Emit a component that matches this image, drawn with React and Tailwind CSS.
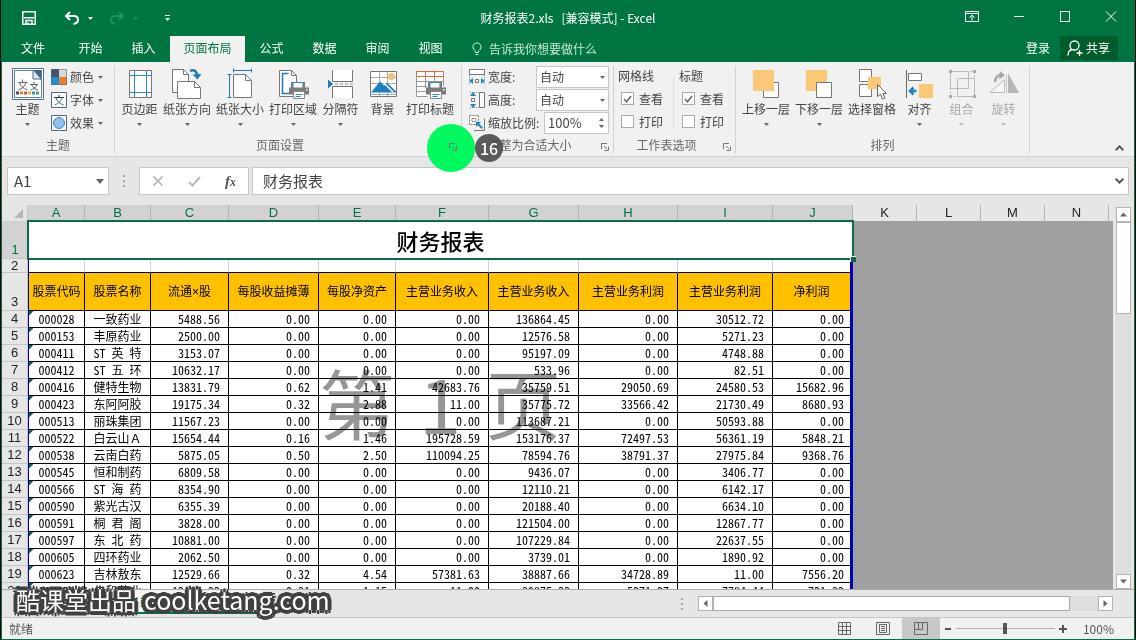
import React, { useState } from "react";

const TABS = ["开始", "插入", "页面布局", "公式", "数据", "审阅", "视图"];

const COLUMNS = [
  { key: "A", width: 57, title: "股票代码" },
  { key: "B", width: 66, title: "股票名称" },
  { key: "C", width: 78, title: "流通×股" },
  { key: "D", width: 90, title: "每股收益摊薄" },
  { key: "E", width: 77, title: "每股净资产" },
  { key: "F", width: 93, title: "主营业务收入" },
  { key: "G", width: 90, title: "主营业务收入" },
  { key: "H", width: 99, title: "主营业务利润" },
  { key: "I", width: 95, title: "主营业务利润" },
  { key: "J", width: 80, title: "净利润" },
];

const EMPTY_COLUMNS = ["K", "L", "M", "N"];

const ROWS = [
  ["000028", "一致药业", "5488.56", "0.00", "0.00", "0.00", "136864.45", "0.00", "30512.72", "0.00"],
  ["000153", "丰原药业", "2500.00", "0.00", "0.00", "0.00", "12576.58", "0.00", "5271.23", "0.00"],
  ["000411", "ST 英 特", "3153.07", "0.00", "0.00", "0.00", "95197.09", "0.00", "4748.88", "0.00"],
  ["000412", "ST 五 环", "10632.17", "0.00", "0.00", "0.00", "533.96", "0.00", "82.51", "0.00"],
  ["000416", "健特生物", "13831.79", "0.62", "1.41", "42683.76", "35759.51", "29050.69", "24580.53", "15682.96"],
  ["000423", "东阿阿胶", "19175.34", "0.32", "2.88", "11.00", "35775.72", "33566.42", "21730.49", "8680.93"],
  ["000513", "丽珠集团", "11567.23", "0.00", "0.00", "0.00", "113687.21", "0.00", "50593.88", "0.00"],
  ["000522", "白云山Ａ", "15654.44", "0.16", "1.46", "195728.59", "153176.37", "72497.53", "56361.19", "5848.21"],
  ["000538", "云南白药", "5875.05", "0.50", "2.50", "110094.25", "78594.76", "38791.37", "27975.84", "9368.76"],
  ["000545", "恒和制药", "6809.58", "0.00", "0.00", "0.00", "9436.07", "0.00", "3406.77", "0.00"],
  ["000566", "ST 海 药", "8354.90", "0.00", "0.00", "0.00", "12110.21", "0.00", "6142.17", "0.00"],
  ["000590", "紫光古汉", "6355.39", "0.00", "0.00", "0.00", "20188.40", "0.00", "6634.10", "0.00"],
  ["000591", "桐 君 阁", "3828.00", "0.00", "0.00", "0.00", "121504.00", "0.00", "12867.77", "0.00"],
  ["000597", "东 北 药", "10881.00", "0.00", "0.00", "0.00", "107229.84", "0.00", "22637.55", "0.00"],
  ["000605", "四环药业", "2062.50", "0.00", "0.00", "0.00", "3739.01", "0.00", "1890.92", "0.00"],
  ["000623", "吉林敖东", "12529.66", "0.32", "4.54", "57381.63", "38887.66", "34728.89", "11.00", "7556.20"],
  ["000650", "仁和药业", "12161.22", "0.31", "1.15", "11.00", "39875.33", "5271.27", "7784.44", "721.32"],
];

/* ---------- small glyphs ---------- */

const Caret = ({ className = "text-[#666]" }) => (
  <svg width="5" height="3" viewBox="0 0 5 3" className={className} aria-hidden="true">
    <path d="M0 0h5L2.5 3z" fill="currentColor" />
  </svg>
);

const Arrow = ({ d }) => (
  <svg width="7" height="7" viewBox="0 0 7 7" fill="#666" aria-hidden="true">
    <path d={d} />
  </svg>
);

const ChevronUp = () => (
  <svg width="9" height="6" viewBox="0 0 9 6" fill="none" stroke="#555" strokeWidth="2" aria-hidden="true">
    <path d="M.7 5.2l3.8-3.8 3.8 3.8" />
  </svg>
);

const Dots = () => (
  <svg width="2" height="12" viewBox="0 0 2 12" fill="#a6a6a6" aria-hidden="true">
    <path d="M0 0h2v2H0zM0 5h2v2H0zM0 10h2v2H0z" />
  </svg>
);

/* ---------- ribbon icons ---------- */

const Big = ({ children }) => (
  <svg width="32" height="32" viewBox="0 0 32 32" fill="none" aria-hidden="true">
    {children}
  </svg>
);

const Small = ({ children }) => (
  <svg width="16" height="16" viewBox="0 0 16 16" fill="none" className="shrink-0" aria-hidden="true">
    {children}
  </svg>
);

const ThemeIcon = () => (
  <Big>
    <path d="M.5.5h31v31H.5z" fill="#fff" stroke="#4f6f93" />
    <path d="M2.500 2.500h27v27h-27z" fill="#fff" stroke="#5f7fa0" />
    <path d="M21 2h8v10z" fill="#4a6580" />
    <path d="M21 3v8h8" fill="#dfe8f0" stroke="#4a6580" />
    <path d="M6 14.500h9.500M10.500 11.500v3M14 14.500c-1 4-4 6-7.500 7.500M7.500 14.500c1 4 4 6 8 7.500" stroke="#666" />
    <path d="M18 16.500h8M22 14v2.500M25 16.500c-1 3-3.500 4.500-6.500 5.500M19.500 16.500c1 3 3.500 4.500 6.500 5.500" stroke="#666" />
    <path d="M4 23.500h3v3H4z" fill="#3c4f6b" />
    <path d="M8 23.500h3v3H8z" fill="#e87d2b" />
    <path d="M12 23.500h3v3h-3z" fill="#d8573c" />
    <path d="M16 23.500h3v3h-3z" fill="#f2b530" />
    <path d="M20 23.500h3v3h-3z" fill="#2b8fc9" />
    <path d="M24 23.500h3v3h-3z" fill="#5f9b3c" />
  </Big>
);

const ColorsIcon = () => (
  <Small>
    <path d="M0 0h8v8H0z" fill="#44546a" />
    <path d="M8 0h8v8H8z" fill="#d9d9d9" />
    <path d="M0 8h8v8H0z" fill="#1e90d2" />
    <path d="M8 8h8v8H8z" fill="#ed7d31" />
    <path d="M.5.5h15v15H.5z" stroke="#5d6b7c" strokeOpacity=".6" />
  </Small>
);

const FontsIcon = () => (
  <Small>
    <path d="M.5.5h15v15H.5z" fill="#fff" stroke="#50677f" />
    <path d="M3 5.500h10M8 3v2.500" stroke="#333" />
    <path d="M11 5.500c-1 4-3.500 6-7.500 7.500" stroke="#2f7fc0" />
    <path d="M5 5.500c1 4 3.500 6 7.500 7.500" stroke="#3b6b3a" />
  </Small>
);

const EffectsIcon = () => (
  <Small>
    <path d="M.5.5h15v15H.5z" fill="#fff" stroke="#50677f" />
    <circle cx="8" cy="8" r="5.500" fill="#8fc1ea" stroke="#3f87c7" />
  </Small>
);

const MarginsIcon = () => (
  <Big>
    <path d="M5.500 2.500h22v27h-22z" fill="#fff" stroke="#777" />
    <path d="M10.500 3v26M22.500 3v26M6 7.500h21M6 24.500h21" stroke="#2b8ac6" />
  </Big>
);

const OrientationIcon = () => (
  <Big>
    <path d="M7.500 24.500h-6v-23h11l5 5v7" fill="#fff" stroke="#777" />
    <path d="M12.500 1.500v5h5" stroke="#777" />
    <path d="M6.500 13.500h17l6 6v11h-23z" fill="#fff" stroke="#777" />
    <path d="M23.500 13.500v6h6" stroke="#777" />
    <path d="M19 3c4-2 7 0 7 5" stroke="#1f78bb" strokeWidth="2.500" />
    <path d="M21.500 6.500l5 5 4-5.500z" fill="#1f78bb" />
  </Big>
);

const PaperSizeIcon = () => (
  <Big>
    <path d="M9.500 6.500h12l6 6v17h-18z" fill="#fff" stroke="#777" />
    <path d="M21.500 6.500v6h6" stroke="#777" />
    <path d="M9.500 2.500h18M9.500.5v4M27.500.5v4M5.500 6.500v23M3.500 6.500h4M3.500 29.500h4" stroke="#1f78bb" />
  </Big>
);

const Printer = () => (
  <g>
    <path d="M16 14.500h10v6H16z" fill="#fff" stroke="#2b8ac6" />
    <path d="M12 19.500h20v7H12z" fill="#7b7b7b" />
    <path d="M14 14v6h2v-6M26 14v6h2v-6" fill="#7b7b7b" />
    <path d="M16.500 23.500h11v7h-11z" fill="#fff" stroke="#888" />
    <path d="M18.500 26.500h7M18.500 28.500h5" stroke="#2b8ac6" />
    <path d="M29 21h1.500v1.500H29z" fill="#fff" />
  </g>
);

const PrintAreaIcon = () => (
  <Big>
    <path d="M2.500 2.500h12l5 5v21h-17z" fill="#fff" stroke="#777" />
    <path d="M14.500 2.500v5h5" stroke="#777" />
    <path d="M12 25.500H5.500v-20h6" stroke="#1f78bb" strokeWidth="1.500" />
    <Printer />
  </Big>
);

const BreaksIcon = () => (
  <Big>
    <path d="M7.500 2v11.500h20V2M7.500 30V18.500h20V30" fill="#fff" stroke="#777" />
    <path d="M10 16h18" stroke="#999" strokeDasharray="3 2" />
    <path d="M3 11.500l5 4.500-5 4.500z" fill="#1f78bb" />
  </Big>
);

const BackgroundIcon = () => (
  <Big>
    <path d="M3.500 3.500h26v25h-26z" fill="#fff" stroke="#777" />
    <path d="M12.500 4v24M20.500 4v24M4 9.500h25M4 15.500h25M4 26.500h25" stroke="#aaa" />
    <circle cx="24.500" cy="8.500" r="3.500" fill="#f3c07a" />
    <path d="M4 24.500l9-11 4 4 3-3 9 9v1z" fill="#1f7ec2" />
    <path d="M17 15l9 9" stroke="#fff" strokeWidth="1.500" />
  </Big>
);

const PrintTitlesIcon = () => (
  <Big>
    <path d="M2.500 3.500h27v25h-27z" fill="#fff" />
    <path d="M2.500 8v20.500h11M11.500 8v12M20.500 8v6M29.500 8v10M3 13.500h26M3 18.500h10M3 23.500h9" stroke="#999" />
    <path d="M2.500 3.500h27v5h-27zM11.500 3.500v5M20.500 3.500v5" fill="#fff" stroke="#e0663a" />
    <Printer />
  </Big>
);

const WidthIcon = () => (
  <Small>
    <path d="M.5.5h15v5H.5z" fill="#fff" stroke="#777" />
    <path d="M.5 6v9M15.500 6v9" stroke="#888" strokeDasharray="1 1" />
    <path d="M6.500 10.500h3v3h-3z" stroke="#777" />
    <path d="M0 12l4-3v6zM16 12l-4-3v6z" fill="#1f86c0" />
  </Small>
);

const HeightIcon = () => (
  <Small>
    <path d="M10.500.5h5v15h-5z" fill="#fff" stroke="#777" />
    <path d="M1 .5h9M1 15.500h9" stroke="#888" strokeDasharray="1 1" />
    <path d="M2.500 6.500h3v3h-3z" stroke="#777" />
    <path d="M4 0L1 4h6zM4 16l-3-4h6z" fill="#1f86c0" />
  </Small>
);

const ScaleIcon = () => (
  <Small>
    <path d="M5 15.500h10.500v-12" fill="none" stroke="#777" />
    <path d="M.5.5h9v9h-9z" fill="#fff" stroke="#777" strokeDasharray="2 1" />
    <path d="M3 3.500h4v3H3z" stroke="#999" />
    <path d="M7 7h5l-1.800 1.800L14 12.600 12.600 14 8.800 10.200 7 12z" fill="#1f86c0" />
  </Small>
);

const ForwardIcon = () => (
  <Big>
    <path d="M13.500 14.500h15v15h-15z" fill="#fff" stroke="#777" />
    <path d="M3 2h21v21H3z" fill="#fbc878" />
  </Big>
);

const BackwardIcon = () => (
  <Big>
    <path d="M3 2h21v21H3z" fill="#fbc878" />
    <path d="M13.500 14.500h15v15h-15z" fill="#fff" stroke="#777" />
  </Big>
);

const PaneIcon = () => (
  <Big>
    <path d="M3.500 1.500h12v12h-12zM3.500 16.500h12v12h-12z" fill="#fff" stroke="#777" />
    <path d="M12 9h13v12H12z" fill="#fbc878" />
    <path d="M21.500 16.500v12l3-2.500 2 5 2.500-1-2-4.500h3.500z" fill="#fff" stroke="#666" />
  </Big>
);

const AlignIcon = () => (
  <Big>
    <path d="M2.500 2v28" stroke="#666" />
    <path d="M4.500 5.500h13v7h-13z" fill="#fff" stroke="#777" />
    <path d="M15 16h14v14H15z" fill="#fbc878" />
    <path d="M12.500 23H7M9.500 19.500L6 23l3.500 3.500" stroke="#1f86c0" strokeWidth="2.500" />
  </Big>
);

const GroupIcon = () => (
  <Big>
    <path d="M4.500 3.500h24v25h-24z" stroke="#bbb" strokeDasharray="2 2" />
    <path d="M4.500 3.500h18v17h-18zM11.500 10.500h17v18h-17z" stroke="#bbb" />
    <path d="M3 2h3v3H3zM27 2h3v3h-3zM3 27h3v3H3zM27 27h3v3h-3z" fill="#aaa" />
  </Big>
);

const RotateIcon = () => (
  <Big>
    <path d="M16.500 11.500v13H2z" fill="#f6f6f6" stroke="#bbb" />
    <path d="M20 5v20h11z" fill="#b5b5b5" />
    <path d="M7 14c0-5 4-8 8-7" stroke="#aaa" strokeWidth="2.500" />
    <path d="M12 3l5 4.500-6 4z" fill="#aaa" />
    <path d="M18.500 6v20" stroke="#ccc" />
  </Big>
);

/* ---------- ribbon pieces ---------- */

const BigButton = ({ icon, label, caret = true, disabled = false }) => (
  <button
    disabled={disabled}
    className="flex flex-col items-center min-w-[37px] h-[62px] mt-0.5 whitespace-nowrap disabled:text-[#a6a6a6]"
  >
    {icon}
    <span className="leading-[18px]">{label}</span>
    {caret && <Caret className={disabled ? "mt-[5px] text-[#c0c0c0]" : "mt-[5px] text-[#666]"} />}
  </button>
);

const SmallButton = ({ icon, label }) => (
  <button className="flex items-center h-[22px]">
    {icon}
    <span className="ml-[3px] mr-1">{label}</span>
    <Caret />
  </button>
);

const Group = ({ title, width, launcher = false, children }) => (
  <section className="flex flex-col shrink-0 border-r border-[#d2d2d2] h-[88px]" style={{ width }}>
    <div className="h-[70px]">{children}</div>
    <div className="flex items-center h-[18px] text-[#666]">
      <h2 className="flex-1 text-center">{title}</h2>
      {launcher && (
        <button aria-label={title} className="relative z-10 w-4 h-4 pt-1 pl-1">
          <svg width="8" height="8" viewBox="0 0 8 8" fill="none" stroke="#777" aria-hidden="true">
            <path d="M.5 6V.5H6M3 3l3 3M7.500 3.500v4h-4" />
          </svg>
        </button>
      )}
    </div>
  </section>
);

const FitSelect = ({ id, icon, label }) => (
  <div className="flex items-center h-[22px]">
    {icon}
    <label htmlFor={id} className="ml-[3px] flex-1">{label}</label>
    <div className="grid items-center w-[73px]">
      <select
        id={id}
        className="col-start-1 row-start-1 appearance-none w-full h-[22px] pl-[3px] bg-white border border-[#c6c6c6] text-[#444]"
      >
        <option>自动</option>
      </select>
      <span className="col-start-1 row-start-1 justify-self-end mr-1 pointer-events-none">
        <Caret />
      </span>
    </div>
  </div>
);

const Check = ({ label, name, defaultChecked }) => (
  <label className="flex items-center h-[23px] ml-[3px]">
    <span className="grid place-items-center mr-[5px]">
      <input
        type="checkbox"
        aria-label={name}
        defaultChecked={defaultChecked}
        className="peer col-start-1 row-start-1 appearance-none w-[13px] h-[13px] bg-white border border-[#ababab]"
      />
      <svg
        width="9"
        height="8"
        viewBox="0 0 9 8"
        fill="none"
        stroke="#666"
        strokeWidth="1.500"
        className="col-start-1 row-start-1 invisible peer-checked:visible pointer-events-none"
        aria-hidden="true"
      >
        <path d="M1 4l2.500 2.800L8 1" />
      </svg>
    </span>
    {label}
  </label>
);

const TitleBar = () => (
  <header className="grid grid-cols-[1fr_auto_1fr] items-center h-9 text-white">
    <div className="flex items-center pl-5">
      <button aria-label="保存">
        <svg width="14" height="14" viewBox="0 0 14 14" fill="none" stroke="#fff" strokeWidth="1.500" aria-hidden="true">
          <path d="M.8.8h12.400v12.400H.8zM2 6.800h10M4 13V9.500h6V13" />
          <path d="M5.500 11.500h1.500V13H5.500z" fill="#fff" stroke="none" />
        </svg>
      </button>
      <button aria-label="撤消" className="ml-7">
        <svg width="16" height="14" viewBox="0 0 16 14" fill="none" stroke="#fff" strokeWidth="2" aria-hidden="true">
          <path d="M6 1L2 5l4 4M2.500 5H10c3 0 4 2 4 3.800 0 2.200-1.500 3.700-4.500 4.200" />
        </svg>
      </button>
      <Caret className="ml-2 text-white" />
      <button aria-label="恢复" className="ml-4" disabled>
        <svg width="16" height="14" viewBox="0 0 16 14" fill="none" stroke="#1f9160" strokeWidth="2" aria-hidden="true">
          <path d="M10 1l4 4-4 4M13.500 5H6C3 5 2 7 2 8.800 2 11 3.500 12.500 6.500 13" />
        </svg>
      </button>
      <Caret className="ml-2 text-[#1f9160]" />
      <button aria-label="自定义快速访问工具栏" className="ml-[26px]">
        <svg width="7" height="7" viewBox="0 0 7 7" fill="#fff" aria-hidden="true">
          <path d="M1 0h5v1H1zM1 3h5L3.500 6z" />
        </svg>
      </button>
    </div>
    <h1 className="whitespace-pre">财务报表2.xls   [兼容模式] - Excel</h1>
    <div className="flex items-center justify-end gap-[34px] pr-[17px] pb-1">
      <button aria-label="功能区显示选项">
        <svg width="14" height="11" viewBox="0 0 14 11" fill="none" stroke="#fff" aria-hidden="true">
          <path d="M.5.5h13v10H.5zM.5 2.500h13M7 9.500v-5M4.500 6.500L7 4.200l2.500 2.300" />
        </svg>
      </button>
      <button aria-label="最小化">
        <svg width="12" height="11" viewBox="0 0 12 11" stroke="#fff" aria-hidden="true">
          <path d="M1 5.500h10" />
        </svg>
      </button>
      <button aria-label="最大化">
        <svg width="12" height="11" viewBox="0 0 12 11" fill="none" stroke="#fff" aria-hidden="true">
          <path d="M1.500.5h9v10h-9z" />
        </svg>
      </button>
      <button aria-label="关闭">
        <svg width="12" height="11" viewBox="0 0 12 11" stroke="#fff" aria-hidden="true">
          <path d="M1 .5l10 10M11 .5l-10 10" />
        </svg>
      </button>
    </div>
  </header>
);

const TabBar = ({ active, onSelect }) => (
  <nav className="flex h-[26px] text-white">
    <button className="w-[62px] pb-0.5">文件</button>
    {TABS.map((tab) => (
      <button
        key={tab}
        onClick={() => onSelect(tab)}
        className={
          tab === active
            ? "w-[75px] pb-0.5 bg-[#f1f1f1] text-[#007542]"
            : "w-[53px] pb-0.5"
        }
      >
        {tab}
      </button>
    ))}
    <button className="flex items-center ml-[15px] text-[#c9e8d8]">
      <svg width="10" height="14" viewBox="0 0 10 14" fill="none" stroke="#d8efe3" aria-hidden="true">
        <path d="M3.500 10.500V9C2 7.800 1 6.600 1 4.800 1 2.500 2.800 1 5 1s4 1.500 4 3.800C9 6.600 8 7.800 6.500 9v1.500zM3.500 12.500h3" />
      </svg>
      <span className="ml-[7px]">告诉我你想要做什么</span>
    </button>
    <div className="flex-1" />
    <button className="pb-0.5">登录</button>
    <button className="flex items-center w-[58px] h-[24px] ml-[10px] mr-4 pl-[7px] bg-[#005c2b]">
      <svg width="16" height="16" viewBox="0 0 16 16" fill="none" stroke="#fff" strokeWidth="1.300" aria-hidden="true">
        <circle cx="7.500" cy="5.500" r="4.500" />
        <path d="M1 15.500c0-3.500 2-5.500 4-6M12.500 10v6M9.500 13h6" />
      </svg>
      <span className="ml-[3px]">共享</span>
    </button>
  </nav>
);

const Ribbon = () => (
  <div className="relative flex h-[95px] pt-1 bg-[#f1f1f1] border-b border-[#d2d2d2] text-[#444]">
    <Group title="主题" width={113}>
      <div className="flex pl-[7px]">
        <BigButton icon={<ThemeIcon />} label="主题" />
        <div className="flex flex-col gap-px ml-[5px]">
          <SmallButton icon={<ColorsIcon />} label="颜色" />
          <SmallButton icon={<FontsIcon />} label="字体" />
          <SmallButton icon={<EffectsIcon />} label="效果" />
        </div>
      </div>
    </Group>
    <Group title="页面设置" width={347} launcher>
      <div className="flex gap-[5px] pl-[6px]">
        <BigButton icon={<MarginsIcon />} label="页边距" />
        <BigButton icon={<OrientationIcon />} label="纸张方向" />
        <BigButton icon={<PaperSizeIcon />} label="纸张大小" />
        <BigButton icon={<PrintAreaIcon />} label="打印区域" />
        <BigButton icon={<BreaksIcon />} label="分隔符" />
        <BigButton icon={<BackgroundIcon />} label="背景" caret={false} />
        <BigButton icon={<PrintTitlesIcon />} label="打印标题" caret={false} />
      </div>
    </Group>
    <Group title="调整为合适大小" width={152} launcher>
      <div className="flex flex-col gap-px pl-[7px] pr-1">
        <FitSelect id="fit-width" icon={<WidthIcon />} label="宽度:" />
        <FitSelect id="fit-height" icon={<HeightIcon />} label="高度:" />
        <div className="flex items-center h-[22px]">
          <ScaleIcon />
          <label htmlFor="fit-scale" className="ml-[3px] flex-1 whitespace-nowrap">缩放比例:</label>
          <div className="flex w-[65px] h-[22px] bg-white border border-[#c6c6c6]">
            <input id="fit-scale" defaultValue="100%" className="w-0 flex-1 pl-[3px] text-[13px] outline-none" />
            <div className="flex flex-col justify-evenly pr-1">
              <button aria-label="增大">
                <Caret className="rotate-180 text-[#666]" />
              </button>
              <button aria-label="减小">
                <Caret />
              </button>
            </div>
          </div>
        </div>
      </div>
    </Group>
    <Group title="工作表选项" width={122} launcher>
      <div className="flex">
        <fieldset className="w-[60px] h-16 pl-1 border-r border-[#dedede]">
          <legend className="h-[21px] leading-5">网格线</legend>
          <Check label="查看" name="查看网格线" defaultChecked />
          <Check label="打印" name="打印网格线" />
        </fieldset>
        <fieldset className="pl-[5px]">
          <legend className="h-[21px] leading-5">标题</legend>
          <Check label="查看" name="查看标题" defaultChecked />
          <Check label="打印" name="打印标题" />
        </fieldset>
      </div>
    </Group>
    <Group title="排列" width={294}>
      <div className="flex gap-[5px] pl-[6px]">
        <BigButton icon={<ForwardIcon />} label="上移一层" />
        <BigButton icon={<BackwardIcon />} label="下移一层" />
        <BigButton icon={<PaneIcon />} label="选择窗格" caret={false} />
        <BigButton icon={<AlignIcon />} label="对齐" />
        <BigButton icon={<GroupIcon />} label="组合" disabled />
        <BigButton icon={<RotateIcon />} label="旋转" disabled />
      </div>
    </Group>
    <div className="flex-1 flex items-end justify-end pr-[10px] pb-[5px]">
      <button aria-label="折叠功能区">
        <ChevronUp />
      </button>
    </div>

    {/* click highlight and step number */}
    <span className="absolute left-[425px] top-[62px] w-12 h-12 rounded-full bg-[#00f95f]" />
    <span className="absolute left-[473px] top-[72px] w-7 h-7 rounded-full bg-[#4a4a4a]/90 text-white text-base font-medium leading-7 text-center z-20">
      16
    </span>
  </div>
);

const FormulaBar = () => (
  <div className="flex h-12 pt-[10px] px-[5px] bg-[#e6e6e6] text-[15px] text-[#444]">
    <div className="flex items-center w-[102px] h-7 bg-white border border-[#c6c6c6]">
      <input aria-label="名称框" defaultValue="A1" className="w-0 flex-1 pl-[6px] outline-none" />
      <button aria-label="名称列表" className="pr-1">
        <svg width="8" height="5" viewBox="0 0 8 5" fill="#666" aria-hidden="true">
          <path d="M0 0h8L4 5z" />
        </svg>
      </button>
    </div>
    <div className="flex items-center justify-center w-[30px] h-7">
      <Dots />
    </div>
    <div className="flex items-center justify-around w-[110px] h-7 bg-white border border-[#c6c6c6]">
      <button aria-label="取消">
        <svg width="12" height="12" viewBox="0 0 12 12" stroke="#bdbdbd" strokeWidth="1.800" aria-hidden="true">
          <path d="M1.500 1.500l9 9M10.500 1.500l-9 9" />
        </svg>
      </button>
      <button aria-label="输入">
        <svg width="13" height="11" viewBox="0 0 13 11" fill="none" stroke="#bdbdbd" strokeWidth="2.200" aria-hidden="true">
          <path d="M1 6l3.500 3.500L12 1" />
        </svg>
      </button>
      <button aria-label="插入函数" className="font-['Liberation_Serif',serif] italic font-bold text-[#555] leading-5">
        f<span className="text-xs">x</span>
      </button>
    </div>
    <div className="flex items-center flex-1 h-7 ml-[3px] bg-white border border-[#c6c6c6]">
      <input aria-label="编辑栏" defaultValue="财务报表" className="w-0 flex-1 pl-[10px] outline-none" />
      <button aria-label="展开编辑栏" className="pl-1 rotate-180">
        <ChevronUp />
      </button>
    </div>
  </div>
);

const RowHead = ({ n, selected = false }) => (
  <th
    scope="row"
    className={
      selected
        ? "p-0 align-bottom bg-[#d2d2d2] border-b border-[#c4c4c4] text-[#007542]"
        : "p-0 align-bottom bg-[#e6e6e6] border-b border-r border-[#c4c4c4] text-[#222]"
    }
  >
    {n}
  </th>
);

const Sheet = () => (
  <div className="relative flex-1 overflow-hidden bg-[#a0a0a0]">
    <table className="table-fixed w-full border-separate border-spacing-0 text-black">
      <colgroup>
        <col className="w-[26px]" />
        {COLUMNS.map((c) => (
          <col key={c.key} style={{ width: c.width }} />
        ))}
        {EMPTY_COLUMNS.map((c) => (
          <col key={c} className="w-16" />
        ))}
        <col />
      </colgroup>
      <thead className="font-['Liberation_Sans',sans-serif] text-[13px] leading-4">
        <tr className="h-4">
          <td className="p-0 bg-[#e6e6e6] border-r border-[#c4c4c4]">
            <svg width="9" height="9" viewBox="0 0 9 9" fill="#b8b8b8" className="ml-auto mr-1" aria-hidden="true">
              <path d="M9 0v9H0z" />
            </svg>
          </td>
          {COLUMNS.map((c) => (
            <th key={c.key} scope="col" className="p-0 font-normal text-[#007542] bg-[#d2d2d2] border-r border-[#b4b4b4]">
              {c.key}
            </th>
          ))}
          {EMPTY_COLUMNS.map((c) => (
            <th key={c} scope="col" className="p-0 font-normal text-[#222] bg-[#e6e6e6] border-r border-[#b4b4b4]">
              {c}
            </th>
          ))}
          <td className="p-0 bg-[#e6e6e6]" />
        </tr>
      </thead>
      <tbody className="leading-4 [&_th]:font-['Liberation_Sans',sans-serif] [&_th]:font-normal [&_th]:text-[13px] [&_th]:leading-4">
        <tr className="h-[38px]">
          <RowHead n={1} selected />
          <td colSpan={10} className="relative p-0 bg-white text-center text-[22px] font-medium">
            财务报表
            <span className="absolute -inset-px border-2 border-[#0b6b43]" />
            <span className="absolute -right-[3px] -bottom-[3px] w-[6px] h-[6px] bg-[#0b6b43] border-t border-l border-white" />
          </td>
        </tr>
        <tr className="h-[14px] [&>th]:leading-[13px]">
          <RowHead n={2} />
          {COLUMNS.map((c) => (
            <td
              key={c.key}
              className="p-0 bg-white border-b border-b-black border-r border-r-[#d4d4d4] first-of-type:border-l first-of-type:border-l-[#0000c0] last:border-r-[3px] last:border-r-[#0000c0]"
            />
          ))}
        </tr>
        <tr className="h-[38px]">
          <RowHead n={3} />
          {COLUMNS.map((c) => (
            <td
              key={c.key}
              className="p-0 bg-[#ffc000] font-['Liberation_Sans','Noto_Sans_CJK_SC',sans-serif] text-center whitespace-nowrap border-b border-r border-black first-of-type:border-l first-of-type:border-l-[#0000c0] last:border-r-[3px] last:border-r-[#0000c0]"
            >
              {c.title}
            </td>
          ))}
        </tr>
        {ROWS.map((row, i) => (
          <tr key={row[0]} className="h-[17px] [font-feature-settings:'hwid']">
            <RowHead n={i + 4} />
            <td className="p-0 text-center bg-white bg-[linear-gradient(135deg,#0b6b43_3px,transparent_3px)] border-b border-r border-black border-l border-l-[#0000c0]">
              {row[0]}
            </td>
            <td
              className={
                row[1].endsWith("Ａ")
                  ? "p-0 text-center bg-white whitespace-pre border-b border-r border-black [font-feature-settings:normal]"
                  : "p-0 text-center bg-white whitespace-pre border-b border-r border-black"
              }
            >
              {row[1]}
            </td>
            {row.slice(2).map((value, j) => (
              <td
                key={j}
                className="p-0 pr-2 last:pr-[6px] text-right bg-white border-b border-r border-black last:border-r-[3px] last:border-r-[#0000c0]"
              >
                {value}
              </td>
            ))}
          </tr>
        ))}
      </tbody>
    </table>

    {/* page number drawn behind the figures in page break preview */}
    <div className="absolute left-[317px] top-[156px] flex gap-6 text-[76px] leading-[80px] text-[#969696] mix-blend-multiply pointer-events-none">
      <span>第</span>
      <span>1</span>
      <span>页</span>
    </div>
  </div>
);

const scrollButton = "flex items-center justify-center w-[15px] h-[15px] bg-white border border-[#b4b4b4]";

const VerticalScroll = () => (
  <div className="flex flex-col items-center w-[21px] pt-[2px] bg-[#e6e6e6]">
    <button aria-label="向上滚动" className={scrollButton}>
      <Arrow d="M0 5.500h7L3.500 1.500z" />
    </button>
    <div className="flex-1 w-[15px] bg-[#dedede]">
      <div className="h-[92px] bg-white border border-[#b4b4b4]" />
    </div>
    <button aria-label="向下滚动" className={scrollButton}>
      <Arrow d="M0 1.500h7L3.500 5.500z" />
    </button>
  </div>
);

const SheetTabs = () => (
  <div className="relative flex items-center h-7 bg-[#e6e6e6] border-t border-[#ababab]">
    <button className="self-start h-6 ml-[100px] w-[160px] border-b-2 border-[#007542] bg-[#f4f4f4] font-bold text-[#007542] whitespace-nowrap">
      ××类上市公司财务指标
    </button>
    <div className="flex-1" />
    <Dots />
    <div className="flex w-[415px] ml-[15px] mr-[21px] bg-[#dedede]">
      <button aria-label="向左滚动" className={scrollButton}>
        <Arrow d="M5.500 0v7L1.500 3.500z" />
      </button>
      <div className="w-[357px] h-[15px] bg-white border border-[#ababab]" />
      <div className="flex-1" />
      <button aria-label="向右滚动" className={scrollButton}>
        <Arrow d="M1.500 0v7l4-3.500z" />
      </button>
    </div>

    {/* the ring of shadows gives the lettering an even, rounded outline */}
    <p className="absolute left-[14px] -top-[5px] flex gap-2 items-baseline text-2xl leading-7 text-white whitespace-nowrap [text-shadow:4px_0_#404040,-4px_0_#404040,0_4px_#404040,0_-4px_#404040,3px_3px_#404040,-3px_3px_#404040,3px_-3px_#404040,-3px_-3px_#404040,2px_0_#404040,-2px_0_#404040,0_2px_#404040,0_-2px_#404040]">
      <span>酷课堂出品</span>
      <span className="text-[25px]">coolketang.com</span>
    </p>
  </div>
);

const StatusBar = () => (
  <footer className="flex items-center h-[22px] bg-[#f1f1f1] border-t border-[#c6c6c6] text-[#555]">
    <span className="pl-[7px]">就绪</span>
    <div className="flex-1" />
    <button aria-label="普通" className="flex justify-center w-[38px]">
      <svg width="13" height="13" viewBox="0 0 13 13" fill="none" stroke="#666" aria-hidden="true">
        <path d="M.5.5h12v12H.5zM4.500.5v12M8.500.5v12M.5 4.500h12M.5 8.500h12" />
      </svg>
    </button>
    <button aria-label="页面布局视图" className="flex justify-center w-[38px]">
      <svg width="14" height="13" viewBox="0 0 14 13" fill="none" stroke="#666" aria-hidden="true">
        <path d="M.5.5h13v12H.5zM3.500 2.500h7v8h-7zM5 4.500h4M5 6.500h4M5 8.500h4" />
      </svg>
    </button>
    <button aria-label="分页预览" className="flex items-center justify-center w-[38px] h-full bg-[#c8c8c8]">
      <svg width="14" height="13" viewBox="0 0 14 13" fill="none" stroke="#666" aria-hidden="true">
        <path d="M.5.5h13v12H.5zM.5 7.500h8v-7M4.500.5v7" />
      </svg>
    </button>
    <button aria-label="缩小" className="ml-[5px]">
      <svg width="7" height="8" viewBox="0 0 7 8" aria-hidden="true">
        <path d="M0 3h6v2H0z" fill="#555" />
      </svg>
    </button>
    <input
      type="range"
      aria-label="缩放"
      min="0"
      max="200"
      defaultValue="100"
      className="w-[99px] h-3 mx-1 appearance-none bg-[linear-gradient(#b0b0b0,#b0b0b0)] bg-[length:100%_1px] bg-center bg-no-repeat [&::-webkit-slider-thumb]:appearance-none [&::-webkit-slider-thumb]:w-1 [&::-webkit-slider-thumb]:h-[11px] [&::-webkit-slider-thumb]:bg-[#555]"
    />
    <button aria-label="放大">
      <svg width="8" height="8" viewBox="0 0 8 8" aria-hidden="true">
        <path d="M3 0h2v3h3v2H5v3H3V5H0V3h3z" fill="#555" />
      </svg>
    </button>
    <span className="ml-4 mr-5">100%</span>
  </footer>
);

const App = () => {
  const [tab, setTab] = useState("页面布局");

  return (
    <div className="h-screen px-px bg-black font-['Noto_Sans_CJK_SC',sans-serif] text-xs">
      <div className="flex flex-col h-full bg-[#007542] border-x border-b border-[#007542] overflow-hidden">
        <TitleBar />
        <TabBar active={tab} onSelect={setTab} />
        <Ribbon />
        <FormulaBar />
        <main className="flex flex-1 min-h-0">
          <Sheet />
          <VerticalScroll />
        </main>
        <SheetTabs />
        <StatusBar />
      </div>
    </div>
  );
};

export default App;
